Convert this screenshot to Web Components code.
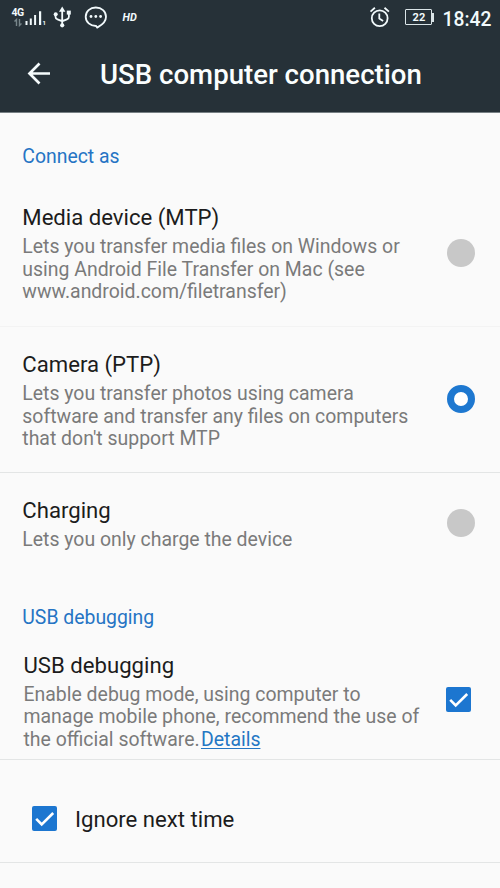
<!DOCTYPE html>
<html lang="en"><head><meta charset="utf-8"><title>USB computer connection</title>
<style>
body{margin:0;background:#fafafa;font-family:Roboto,sans-serif;color:#1c1c1c}
</style></head><body>
<settings-screen></settings-screen>
<script>
function define(name, html){
  customElements.define(name, class extends HTMLElement{
    constructor(){
      super();
      const t=document.createElement('template');
      t.innerHTML=html.trim();
      this.attachShadow({mode:'open'}).append(t.content.cloneNode(true));
    }
  });
}

define('status-bar', `
<style>
:host{display:flex;box-sizing:border-box;height:36px;padding:0 8.5px 0 11.5px;background:#263138;color:#f2fafc;justify-content:space-between}
.left,.right{display:flex;align-items:flex-start}
svg{display:block;flex:none}
.net{display:flex;flex-direction:column;width:13px}
.net span{font:700 10.5px/11px Roboto,sans-serif;margin-top:7px;letter-spacing:-.6px}
.sim{font:700 6px/7px Roboto,sans-serif;margin:19px 0 0 0;width:9px}
.hd{font:italic 700 10.8px/12px Roboto,sans-serif;margin:12px 0 0 15px}
.bat{display:flex;align-items:center;margin:9px 0 0 12px}
.cell{box-sizing:border-box;width:27px;height:16px;border:1.5px solid #dbe5e8;border-radius:1px;font:700 11px/15px Roboto,sans-serif;text-align:center;padding-left:2px;letter-spacing:.2px}
.tip{width:2px;height:9px;background:#dbe5e8}
time{font:500 19.3px/22px Roboto,sans-serif;margin:8.6px 0 0 9px}
</style>
<div class="left">
 <div class="net"><span>4G</span>
  <svg width="11" height="9" viewBox="0 0 11 9" fill="none" stroke="#77858a" stroke-width="1.4"><path d="M4.5 8V1.5L2.5 3.5M7.5 1v6.5L9.5 5.5"/></svg>
 </div>
 <svg width="18" height="36" fill="#f2fafc"><path d="M.5 21H2.5v4H.5zM4.8 18.5h2V25h-2zM9.1 15h2v10h-2zM14 11.3h2.2V25H14z"/></svg>
 <span class="sim">1</span>
 <svg width="20" height="36" viewBox="52 0 20 36" fill="none" stroke="#f2fafc" stroke-width="1.8"><path d="M62.2 10v15M55.5 14.5v2.3q0 2 2 2.5l4.7 1.9 4.7-1.9q2-.7 2-2.6v-3"/><g fill="#f2fafc" stroke="none"><path d="M62.2 6.5l3.2 5.2H59z"/><circle cx="55.7" cy="14.3" r="2"/><path d="M66.8 10.6h4v4h-4z"/><circle cx="62.2" cy="25.3" r="2.1"/></g></svg>
 <svg style="margin-left:12px" width="24" height="36" viewBox="84 0 24 36"><path d="M96 26c-5.7 0-10.3-4-10.3-9.3S90 7.5 95.8 7.5 106 11.4 106 16.8c0 4.2-3.3 7.7-7.7 10.1l-1.1.6z" fill="none" stroke="#f2fafc" stroke-width="1.8"/><g fill="#f2fafc"><circle cx="91" cy="16.5" r="1.4"/><circle cx="95.8" cy="16.5" r="1.4"/><circle cx="100.6" cy="16.5" r="1.4"/></g></svg>
 <span class="hd">HD</span>
</div>
<div class="right">
 <svg width="24" height="36" viewBox="369 0 24 36" fill="none" stroke="#f2fafc" stroke-width="1.8"><circle cx="379.7" cy="18.3" r="7.9"/><path d="M379.3 13.5v5l3.8 2.5M370.5 11.6l4.4-3.8M388.9 11.6l-4.4-3.8"/></svg>
 <div class="bat"><div class="cell">22</div><div class="tip"></div></div>
 <time>18:42</time>
</div>`);

define('app-header', `
<style>
:host{display:flex;align-items:center;box-sizing:border-box;height:77px;padding-left:27px;background:#263138;color:#fafefe;border-bottom:1px solid #778084}
svg{flex:none}
h1{margin:2px 0 0 49px;font:500 27.6px/32px Roboto,sans-serif;white-space:nowrap}
</style>
<svg width="24" height="24" viewBox="0 0 24 24" fill="none" stroke="#f5fbfc" stroke-width="2.7"><path d="M23 11.5H3M12.5 1.5l-10 10 10 10"/></svg>
<h1><slot></slot></h1>`);

define('section-label', `
<style>
:host{display:block;box-sizing:border-box;padding:0 22.3px;height:var(--h);padding-top:var(--t);color:#2574c4;font-size:19.4px;line-height:23px}
</style><slot></slot>`);

define('pref-item', `
<style>
:host{display:flex;box-sizing:border-box;align-items:center;height:var(--h);padding:0 25px 0 22.3px;border-bottom:1px solid var(--line,#e3e5e5)}
.text{width:400px;margin-right:auto;padding-top:var(--pt,2px);white-space:nowrap}
h2{margin:0;font-size:22.15px;line-height:26px;font-weight:400}
p{margin:6px 0 0;color:#7a7a7a;font-size:19.44px;line-height:22.67px}
.control{margin-bottom:1px}
</style>
<div class="text"><h2><slot name="title"></slot></h2><p><slot></slot></p></div>
<div class="control"><slot name="control"></slot></div>`);

define('radio-dot', `
<style>
:host{display:block;box-sizing:border-box;flex:none;width:28px;height:28px;border-radius:50%;background:#c8c8c8}
:host([checked]){background:#fff;border:7px solid #1e78d0}
</style>`);

define('check-box', `
<style>:host{display:block;flex:none;width:25px;height:25px}svg{display:block}</style>
<svg width="25" height="25" viewBox="0 0 25 25"><rect width="25" height="25" rx="2" fill="#1c76d0"/><path d="M4.2 12.8l5.5 5.6L21.2 7" fill="none" stroke="#fff" stroke-width="2.6"/></svg>`);

define('check-row', `
<style>
:host{display:flex;align-items:center;box-sizing:border-box;height:103px;padding:14px 0 0 32px;gap:18px;border-bottom:1px solid #e3e5e5;font-size:22.15px;line-height:26px}
span{padding-top:2px}
</style><check-box></check-box><span><slot></slot></span>`);

define('text-link', `
<style>:host{margin-left:1.3px}a{color:#2477c4;text-decoration:underline;text-decoration-thickness:1.4px;text-underline-offset:2px;text-decoration-skip-ink:none}</style><a><slot></slot></a>`);

define('settings-screen', `
<style>:host{display:flex;flex-direction:column;width:500px;height:888px;overflow:hidden;background:#fafafa}
status-bar,app-header,section-label,pref-item,check-row{flex:none}</style>
<status-bar></status-bar>
<app-header>USB computer connection</app-header>
<section-label style="--h:67px;--t:32px">Connect as</section-label>
<pref-item style="--h:147px;--line:#f3f3f3"><span slot="title">Media device (MTP)</span>Lets you transfer media files on Windows or<br>using Android File Transfer on Mac (see<br>www.android.com/filetransfer)<radio-dot slot="control"></radio-dot></pref-item>
<pref-item style="--h:146px;--pt:3px"><span slot="title">Camera (PTP)</span>Lets you transfer photos using camera<br>software and transfer any files on computers<br>that don't support MTP<radio-dot slot="control" checked></radio-dot></pref-item>
<pref-item style="--h:101px;--line:transparent;--pt:2.6px"><span slot="title">Charging</span>Lets you only charge the device<radio-dot slot="control"></radio-dot></pref-item>
<section-label style="--h:67px;--t:32px">USB debugging</section-label>
<pref-item style="--h:119px;--pt:3.4px;padding-left:23.5px;padding-right:29px"><span slot="title">USB debugging</span>Enable debug mode, using computer to<br>manage mobile phone, recommend the use of<br>the official software.<text-link>Details</text-link><check-box slot="control"></check-box></pref-item>
<check-row>Ignore next time</check-row>`);
</script></body></html>
